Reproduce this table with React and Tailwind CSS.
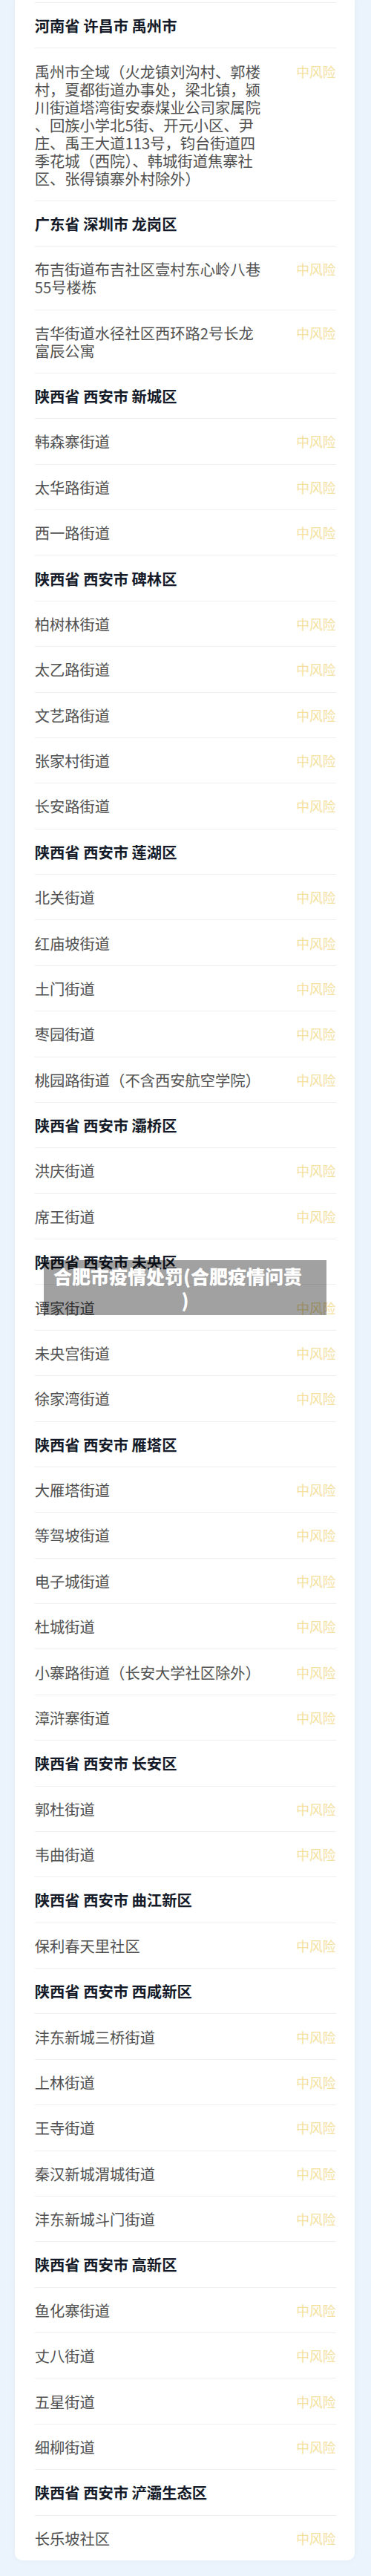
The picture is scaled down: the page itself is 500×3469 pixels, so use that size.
import React from 'react';

const sections = [
  {
    title: '河南省 许昌市 禹州市',
    items: [
      [
        '禹州市全域（火龙镇刘沟村、郭楼',
        '村，夏都街道办事处，梁北镇，颍',
        '川街道塔湾街安泰煤业公司家属院',
        '、回族小学北5街、开元小区、尹',
        '庄、禹王大道113号，钧台街道四',
        '季花城（西院）、韩城街道焦寨社',
        '区、张得镇寨外村除外）',
      ],
    ],
  },
  {
    title: '广东省 深圳市 龙岗区',
    items: [
      ['布吉街道布吉社区壹村东心岭八巷', '55号楼栋'],
      ['吉华街道水径社区西环路2号长龙', '富辰公寓'],
    ],
  },
  { title: '陕西省 西安市 新城区', items: ['韩森寨街道', '太华路街道', '西一路街道'] },
  {
    title: '陕西省 西安市 碑林区',
    items: ['柏树林街道', '太乙路街道', '文艺路街道', '张家村街道', '长安路街道'],
  },
  {
    title: '陕西省 西安市 莲湖区',
    items: ['北关街道', '红庙坡街道', '土门街道', '枣园街道', '桃园路街道（不含西安航空学院）'],
  },
  { title: '陕西省 西安市 灞桥区', items: ['洪庆街道', '席王街道'] },
  { title: '陕西省 西安市 未央区', items: ['谭家街道', '未央宫街道', '徐家湾街道'] },
  {
    title: '陕西省 西安市 雁塔区',
    items: ['大雁塔街道', '等驾坡街道', '电子城街道', '杜城街道', '小寨路街道（长安大学社区除外）', '漳浒寨街道'],
  },
  { title: '陕西省 西安市 长安区', items: ['郭杜街道', '韦曲街道'] },
  { title: '陕西省 西安市 曲江新区', items: ['保利春天里社区'] },
  {
    title: '陕西省 西安市 西咸新区',
    items: ['沣东新城三桥街道', '上林街道', '王寺街道', '秦汉新城渭城街道', '沣东新城斗门街道'],
  },
  { title: '陕西省 西安市 高新区', items: ['鱼化寨街道', '丈八街道', '五星街道', '细柳街道'] },
  { title: '陕西省 西安市 浐灞生态区', items: ['长乐坡社区'] },
];

function AreaRow({ lines, last }) {
  const list = Array.isArray(lines) ? lines : [lines];
  return (
    <div className={`flex items-start justify-between py-[18.2px] ${last ? '' : 'border-b border-[#efefef]'}`}>
      <div className="w-[312px] whitespace-nowrap text-[20.3px] leading-[24px] text-[#505050]">
        {list.map((l, i) => (
          <div key={i}>{l}</div>
        ))}
      </div>
      <span className="shrink-0 text-[17.8px] leading-[24px] text-[#f4e09c]">中风险</span>
    </div>
  );
}

export default function App() {
  const rows = [];
  sections.forEach((s, si) => {
    rows.push(
      <div key={`h${si}`} className="border-b border-[#efefef] py-[18.2px] text-[20.3px] leading-[24px] font-bold text-[#141a28]">
        {s.title}
      </div>
    );
    s.items.forEach((it, ii) => {
      const last = si === sections.length - 1 && ii === s.items.length - 1;
      rows.push(<AreaRow key={`r${si}-${ii}`} lines={it} last={last} />);
    });
  });

  return (
    <div
      className="relative min-h-screen bg-[#ebf4fc] pb-[20px]"
      style={{ fontFamily: '"Noto Sans CJK SC", "Noto Sans", sans-serif' }}
    >
      <div className="ml-[20px] w-[458px] rounded-b-[10px] bg-white pl-[26.7px] pr-[25.5px] shadow-[0_0_8px_rgba(0,0,0,0.04)]">
        <div className="h-[4px] border-b border-[#efefef]" />
        {rows}
      </div>

      {/* caption overlay */}
      <div className="absolute left-[59px] top-[1697px] h-[74px] w-[381px] bg-[rgba(0,0,0,0.37)] pt-[5px] text-[25px] font-black leading-[32px] text-white">
        <div className="pl-[13px]">合肥市疫情处罚(合肥疫情问责</div>
        <div className="text-center">)</div>
      </div>
    </div>
  );
}
